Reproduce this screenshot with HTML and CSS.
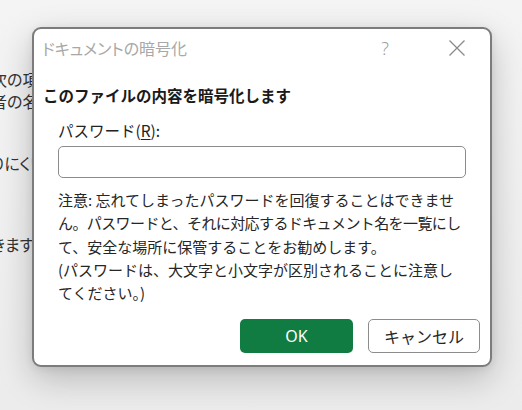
FILE: index.html
```html
<!DOCTYPE html>
<html lang="ja">
<head>
<meta charset="utf-8">
<link rel="stylesheet" href="styles.css">
</head>
<body>
<div class="screen">
  <div class="doc">
    <p class="doc-line first">次の項目</p>
    <p class="doc-line">者の名前</p>
    <p class="doc-line gap">りにくい</p>
    <p class="doc-line gap2">きます</p>
  </div>
  <div class="dialog">
    <div class="titlebar">
      <span class="title">ドキュメントの暗号化</span>
      <span class="help">?</span>
      <span class="close"><svg width="18" height="18" viewBox="0 0 18 18"><path d="M1.5 1.5 L16.5 16.5 M16.5 1.5 L1.5 16.5" stroke="#8a8a8a" stroke-width="1.3" fill="none"/></svg></span>
    </div>
    <div class="content">
      <div class="heading">このファイルの内容を暗号化します</div>
      <div class="form">
        <div class="label">パスワード(<u>R</u>):</div>
        <div class="input"></div>
        <p class="note">注意: 忘れてしまったパスワードを回復することはできませ<br><span class="tight">ん。パスワードと、それに対応するドキュメント名を一覧にし</span><br>て、安全な場所に保管することをお勧めします。<br>(パスワードは、大文字と小文字が区別されることに注意し<br>てください。)</p>
      </div>
    </div>
    <div class="buttons">
      <div class="btn primary">OK</div>
      <div class="btn secondary">キャンセル</div>
    </div>
  </div>
</div>
</body>
</html>
```
FILE: styles.css
```css
html, body {
  margin: 0;
  padding: 0;
}
body {
  width: 522px;
  height: 410px;
  overflow: hidden;
  font-family: "Noto Sans CJK JP", "Noto Sans", sans-serif;
}
.screen {
  position: relative;
  width: 522px;
  height: 410px;
  background: linear-gradient(#f4f4f4, #ececec);
  overflow: hidden;
}
.doc {
  padding-top: 68px;
  margin-left: -9px;
  font-feature-settings: "palt";
}
.doc-line {
  margin: 0;
  font-size: 16px;
  line-height: 22px;
  color: #333;
  white-space: nowrap;
}
.doc-line.gap { margin-top: 40px; }
.doc-line.gap2 { margin-top: 59px; }
.dialog {
  position: absolute;
  left: 32px;
  top: 27px;
  width: 456px;
  height: 336px;
  background: #fff;
  border: 2px solid #7c7c7c;
  border-radius: 9px;
  box-shadow: 0 12px 34px rgba(0,0,0,0.22), 0 2px 8px rgba(0,0,0,0.08);
  display: flex;
  flex-direction: column;
}
.titlebar {
  height: 38px;
  display: flex;
  align-items: center;
  padding-left: 8px;
}
.title {
  flex: 1;
  font-size: 16px;
  color: #a8a8a8;
  font-feature-settings: "palt";
}
.help {
  width: 30px;
  text-align: center;
  font-family: "Noto Sans", sans-serif;
  font-weight: 300;
  font-size: 18px;
  color: #a0a0a0;
  margin-right: 48px;
}
.close {
  width: 18px;
  height: 18px;
  margin-right: 24px;
  display: flex;
}
.content {
  flex: 1;
  padding: 16px 10px 0 9px;
}
.heading {
  font-size: 15.5px;
  font-weight: bold;
  color: #1a1a1a;
  line-height: 24px;
}
.form {
  padding-left: 15px;
  padding-right: 14px;
  padding-top: 12px;
}
.label {
  font-size: 15.5px;
  line-height: 22px;
  color: #222;
}
.label u {
  text-underline-offset: 2px;
}
.input {
  margin-top: 5px;
  height: 30px;
  border: 1px solid #8c8c8c;
  border-radius: 5px;
}
.note {
  margin: 10px 0 0;
  font-size: 15px;
  line-height: 23.3px;
  color: #262626;
  white-space: nowrap;
}
.tight {
  letter-spacing: -0.6px;
}
.buttons {
  display: flex;
  justify-content: flex-end;
  gap: 15px;
  padding: 0 10px 12px 0;
}
.btn {
  width: 113px;
  height: 34px;
  border-radius: 5px;
  display: flex;
  align-items: center;
  justify-content: center;
  font-size: 16px;
  box-sizing: border-box;
}
.btn.primary {
  background: #107c41;
  color: #fff;
  font-family: "Noto Sans", sans-serif;
}
.btn.secondary {
  width: 112px;
  background: #fff;
  border: 1px solid #8c8c8c;
  color: #262626;
}
```
